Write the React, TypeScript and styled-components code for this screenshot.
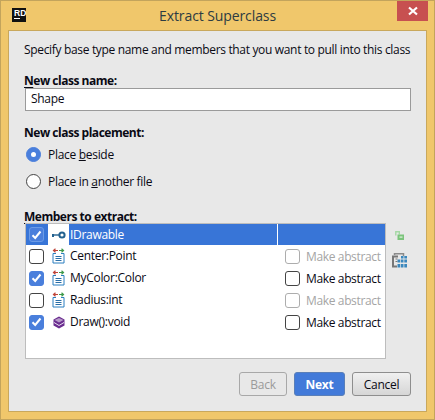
import React from "react";
import styled, { createGlobalStyle } from "styled-components";

const Global = createGlobalStyle`
  html, body { margin: 0; padding: 0; background: #f0c76b; }
  body { font-family: "Open Sans", "Noto Sans", sans-serif; font-size: 12px; color: #0a0a14; }
`;

const Frame = styled.div`
  width: 435px; height: 420px; box-sizing: border-box;
  border: 1px solid #c3a45c; background: #f0c76b;
  display: flex; flex-direction: column; padding: 0 7px 7px 7px;
`;
const TitleBar = styled.div`
  height: 29px; flex: none; display: flex; align-items: center; position: relative; margin: 0 -6px;
`;
const Logo = styled.div`
  width: 14px; height: 14px; background: #111; margin-left: 10px; margin-top: -1px;
  display: flex; flex-direction: column; color: #fff; font: bold 8.5px/8px "Liberation Sans", sans-serif;
  padding: 1px 0 0 2px; box-sizing: border-box; flex: none;
  i { display: block; width: 6px; height: 1px; background: #fff; margin-top: 1px; }
`;
const Title = styled.div`
  flex: 1; text-align: center; font-size: 14px; color: #2c3b42; letter-spacing: -0.1px; padding-right: 24px;
  font-family: "Open Sans", sans-serif; margin-top: -1px;
`;
const Close = styled.div`
  position: absolute; right: 5px; top: 0; width: 31px; height: 20px; background: #c75050;
  display: flex; align-items: center; justify-content: center;
`;
const Body = styled.div`
  flex: 1; background: #e8e8e8; border: 1px solid #c9a85c; display: flex; flex-direction: column;
  padding: 0 15px 15px 15px; min-height: 0;
`;
const Lead = styled.div`
  margin-top: 10px; height: 18px; line-height: 18px; white-space: nowrap; letter-spacing: -0.33px;
`;
const Label = styled.div`
  font-weight: 700; height: 17px; line-height: 17px; white-space: nowrap; letter-spacing: -0.48px;
  u { text-underline-offset: 2px; }
`;
const NameLabel = styled(Label)` margin-top: 13px; height: 16px; `;
const Input = styled.div`
  margin: 0 0 0 1px; height: 23px; box-sizing: border-box; border: 1px solid #9a9a9a; background: #fff;
  padding-left: 5px; line-height: 20px; letter-spacing: -0.3px; flex: none;
`;
const PlaceLabel = styled(Label)` margin-top: 13px; `;
const Radios = styled.div` display: flex; flex-direction: column; `;
const RadioRow = styled.div`
  height: 27px; display: flex; align-items: center; padding-left: 2px; gap: 7px; letter-spacing: -0.3px;
`;
const Radio = styled.span<{ $on?: boolean }>`
  width: 15px; height: 15px; box-sizing: border-box; border-radius: 50%;
  background: ${p => p.$on ? "#4a7fdc" : "#fff"}; border: 1px solid ${p => p.$on ? "#4a7fdc" : "#444"};
  display: flex; align-items: center; justify-content: center;
  &::after { content: ""; width: 5px; height: 5px; border-radius: 50%; background: #fff; display: ${p => p.$on ? "block" : "none"}; }
`;
const MembersLabel = styled(Label)` margin-top: 14px; height: 14px; line-height: 15px; `;
const MembersWrap = styled.div` display: flex; margin-left: 1px; gap: 6px; `;
const Table = styled.div`
  width: 361px; height: 136px; box-sizing: border-box; background: #fff; border: 1px solid #bdbdbd;
  display: flex; flex-direction: column; flex: none;
`;
const Row = styled.div<{ $sel?: boolean }>`
  height: 22px; flex: none; display: flex; align-items: center; letter-spacing: -0.3px;
  background: ${p => p.$sel ? "#3875d7" : "#fff"};
  color: ${p => p.$sel ? "#fff" : "#0a0a14"};
  &:first-child { height: 21px; }
`;
const CheckCell = styled.div` width: 22px; display: flex; padding-left: 3px; flex: none; box-sizing: border-box; `;
const IconCell = styled.div`
  width: 21px; height: 100%; background: #fff; display: flex; align-items: center; justify-content: center; flex: none;
`;
const NameCell = styled.div<{ $sel?: boolean }>`
  width: 209px; flex: none; height: 100%; line-height: 22px; padding-left: 1px; box-sizing: border-box;
  border-right: 1px solid ${p => p.$sel ? "#fff" : "transparent"};
`;
const AbstractCell = styled.div<{ $off?: boolean }>`
  display: flex; align-items: center; gap: 6px; padding-left: 7px; white-space: nowrap; letter-spacing: -0.36px;
  color: ${p => p.$off ? "#a5a5a5" : "#0a0a14"};
`;
const Box = styled.span<{ $on?: boolean; $off?: boolean; $sel?: boolean }>`
  width: 15px; height: 15px; box-sizing: border-box; border-radius: 3px; flex: none;
  background: ${p => p.$on ? "#4a7fdc" : "#fff"};
  border: 1px solid ${p => p.$on ? (p.$sel ? "#6b9be6" : "#4a7fdc") : p.$off ? "#adadad" : "#444"};
  display: flex; align-items: center; justify-content: center;
`;
const SideIcons = styled.div`
  display: flex; flex-direction: column; align-items: flex-start; padding-top: 8px; gap: 13px;
  svg:first-child { margin-left: 3px; }
`;
const Buttons = styled.div` margin-top: auto; display: flex; justify-content: flex-end; gap: 7px; `;
const Button = styled.button<{ $kind?: "primary" | "off" }>`
  height: 24px; padding: 0; border-radius: 3px; font: inherit; letter-spacing: -0.3px; box-sizing: border-box;
  font-weight: ${p => p.$kind === "primary" ? 700 : 400};
  color: ${p => p.$kind === "primary" ? "#fff" : p.$kind === "off" ? "#9a9a9a" : "#0a0a14"};
  background: ${p => p.$kind === "primary" ? "#427ad9" : p.$kind === "off" ? "#e8e8e8" : "linear-gradient(#f0f0f0,#d6d6d6)"};
  border: 1px solid ${p => p.$kind === "primary" ? "#5a7fb8" : p.$kind === "off" ? "#a8a8a8" : "#8e8e8e"};
`;
const BackBtn = styled(Button)` width: 48px; `;
const NextBtn = styled(Button)` width: 51px; `;
const CancelBtn = styled(Button)` width: 59px; `;

const Tick = () => (
  <svg width="11" height="10" viewBox="0 0 11 10"><path d="M1.500 5.200 4.200 8 9.500 1.500" fill="none" stroke="#fff" strokeWidth="2" /></svg>
);
const KeyIcon = () => (
  <svg width="14" height="8" viewBox="0 0 14 8">
    <path d="M1 4h6" stroke="#23618f" strokeWidth="1.400" /><rect x="0" y="3" width="2" height="3" fill="#23618f" />
    <circle cx="10" cy="4" r="2.600" fill="none" stroke="#23618f" strokeWidth="2" />
  </svg>
);
const FieldIcon = () => (
  <svg width="15" height="16" viewBox="0 0 15 16">
    <path d="M2 5.500h3M10 5.500h3M2 5.500v9.500h11v-9.500" fill="#fff" stroke="#2a7fc0" strokeWidth="1" />
    <path d="M4.500 8.500h6M4.500 10.500h6M4.500 12.500h6" stroke="#2a6fa8" strokeWidth="1" />
    <path d="M7 2.500H2.500M4.500 .8 2.500 2.500l2 1.800" fill="none" stroke="#c0453a" strokeWidth="1.200" />
    <path d="M8 2.500h4.500M10.500 .8l2 1.700-2 1.800" fill="none" stroke="#3f9a4c" strokeWidth="1.200" />
  </svg>
);
const MethodIcon = () => (
  <svg width="12" height="13" viewBox="0 0 12 13">
    <path d="M6 .5 11.500 3.500v6L6 12.500.5 9.500v-6z" fill="#6a2d8f" />
    <path d="M1.500 4 6 6.500 10.500 4 6 2z" fill="#b79ac9" />
    <path d="M1 6.500 6 9.500l5-3" fill="none" stroke="#e9dff0" strokeWidth="1" />
  </svg>
);
const LockIcon = () => (
  <svg width="9" height="9" viewBox="0 0 9 9">
    <path d="M.8 4.500V.8h3.500V3.500" fill="none" stroke="#a5d8a5" strokeWidth="1.400" />
    <rect x="2.500" y="3.500" width="6.500" height="5.500" fill="#7cc47c" /><rect x="4.500" y="5.500" width="3" height="1.200" fill="#e0f2e0" />
  </svg>
);
const TableIcon = () => (
  <svg width="15" height="15" viewBox="0 0 15 15">
    <path d="M2.500 2V.8h9V3" fill="none" stroke="#8a8a8a" strokeWidth="1.500" />
    <path d="M6 3.500H1v10h4" fill="none" stroke="#777" strokeWidth="2" />
    <path d="M3.500 6h2M3.500 8.500h2" stroke="#777" />
    <g fill="#3a87bd">
      <rect x="9" y="3" width="2.500" height="2.500" /><rect x="12.300" y="3" width="2.700" height="2.500" />
      <rect x="5.500" y="6.500" width="2.800" height="3" /><rect x="9" y="6.500" width="2.500" height="3" /><rect x="12.300" y="6.500" width="2.700" height="3" />
      <rect x="5.500" y="11" width="2.800" height="3.500" /><rect x="9" y="11" width="2.500" height="3.500" /><rect x="12.300" y="11" width="2.700" height="3.500" />
    </g>
  </svg>
);

const members = [
  { name: "IDrawable", on: true, icon: <KeyIcon />, sel: true },
  { name: "Center:Point", on: false, icon: <FieldIcon />, abstract: "off" },
  { name: "MyColor:Color", on: true, icon: <FieldIcon />, abstract: "on" },
  { name: "Radius:int", on: false, icon: <FieldIcon />, abstract: "off" },
  { name: "Draw():void", on: true, icon: <MethodIcon />, abstract: "on" },
];

export default function App() {
  return (
    <>
      <Global />
      <Frame>
        <TitleBar>
          <Logo>RD<i /></Logo>
          <Title>Extract Superclass</Title>
          <Close>
            <svg width="10" height="10" viewBox="0 0 10 10"><path d="M1 1.500 9 8.500M9 1.500 1 8.500" stroke="#fff" strokeWidth="2.200" /></svg>
          </Close>
        </TitleBar>
        <Body>
          <Lead>Specify base type name and members that you want to pull into this class</Lead>
          <NameLabel><u>N</u>ew class name:</NameLabel>
          <Input>Shape</Input>
          <PlaceLabel>New class placement:</PlaceLabel>
          <Radios>
            <RadioRow><Radio $on /><span>Place <u>b</u>eside</span></RadioRow>
            <RadioRow><Radio /><span>Place in <u>a</u>nother file</span></RadioRow>
          </Radios>
          <MembersLabel><u>M</u>embers to extract:</MembersLabel>
          <MembersWrap>
            <Table>
              {members.map(m => (
                <Row key={m.name} $sel={m.sel}>
                  <CheckCell><Box $on={m.on} $sel={m.sel}>{m.on && <Tick />}</Box></CheckCell>
                  <IconCell>{m.icon}</IconCell>
                  <NameCell $sel={m.sel}>{m.name}</NameCell>
                  {m.abstract && (
                    <AbstractCell $off={m.abstract === "off"}>
                      <Box $off={m.abstract === "off"} />Make abstract
                    </AbstractCell>
                  )}
                </Row>
              ))}
            </Table>
            <SideIcons><LockIcon /><TableIcon /></SideIcons>
          </MembersWrap>
          <Buttons>
            <BackBtn $kind="off" disabled>Back</BackBtn>
            <NextBtn $kind="primary">Next</NextBtn>
            <CancelBtn>Cancel</CancelBtn>
          </Buttons>
        </Body>
      </Frame>
    </>
  );
}
